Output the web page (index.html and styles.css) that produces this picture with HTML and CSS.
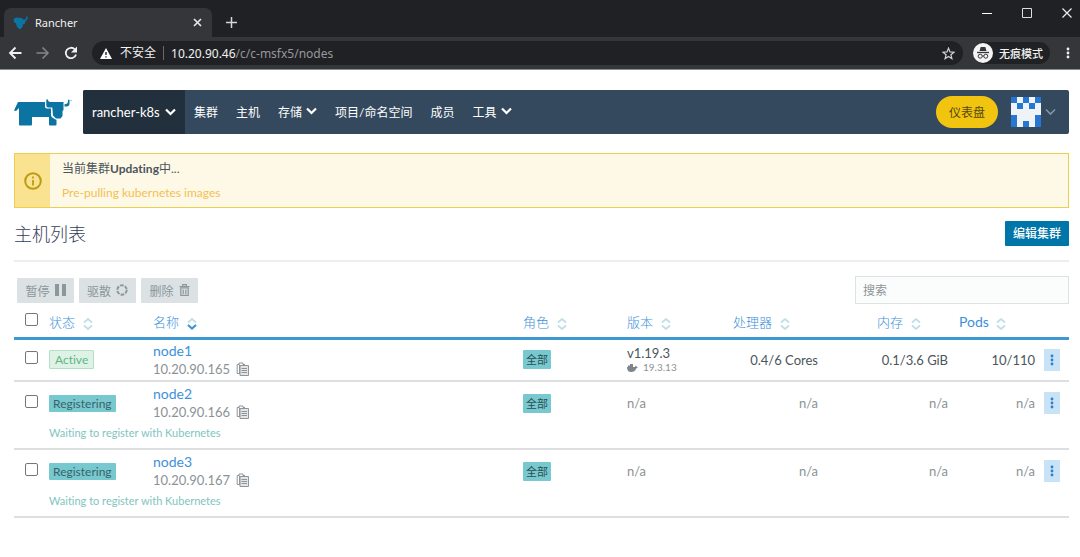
FILE: index.html
```html
<!DOCTYPE html>
<html lang="zh-CN">
<head>
<meta charset="utf-8">
<title>Rancher</title>
<link rel="stylesheet" href="styles.css">
</head>
<body>
<svg class="defs" aria-hidden="true">
  <symbol id="sort" viewBox="0 0 10 12"><path d="M1 4.500 5 1l4 3.500M1 7.500 5 11l4-3.500" fill="none" stroke="#bfdeeb" stroke-width="1.700"/></symbol>
  <symbol id="chev" viewBox="0 0 11 8"><path d="M1 1.500 5.500 6 10 1.500" fill="none" stroke="currentColor" stroke-width="2.200"/></symbol>
  <symbol id="copy" viewBox="0 0 13 14"><path d="M4 11.500H1.200v-9H3V1h4v1.500h2M3.500 2.500v9" fill="none" stroke="#8f9599"/><path d="M4 3.500h8.500v10H4z" fill="#e3e5e6" stroke="#8f9599"/><path d="M5.500 6.500h5.500M5.500 8.500h5.500M5.500 10.500h5.500" stroke="#8f9599"/></symbol>
  <symbol id="dots" viewBox="0 0 4 12"><circle cx="2" cy="2" r="1.400"/><circle cx="2" cy="6" r="1.400"/><circle cx="2" cy="10" r="1.400"/></symbol>
</svg>

<div class="browser">
  <div class="tabstrip">
    <div class="tab">
      <svg class="favicon" width="15" height="14" viewBox="0 0 15 14"><path d="M.5 3 3 1.500 9 2l1 1.500h2l1-1V.500h1.500v3L12.500 5 12 7.500l-2 1-.5 2.500L7 13.500 4 11 3 7.500 1 6z" fill="#0b74a3"/></svg>
      <span class="tab-title">Rancher</span>
      <button class="bare" aria-label="关闭标签页"><svg width="9" height="9" viewBox="0 0 9 9"><path d="M1 1l7 7M8 1 1 8" stroke="#e6e6e8" stroke-width="1.700"/></svg></button>
    </div>
    <button class="bare newtab" aria-label="新标签页"><svg width="11" height="11" viewBox="0 0 11 11"><path d="M5.500 0v11M0 5.500h11" stroke="#d5d6d8" stroke-width="1.500"/></svg></button>
    <div class="window-controls">
      <button class="bare" aria-label="最小化"><svg width="10" height="10" viewBox="0 0 10 10"><path d="M0 5.500h10" stroke="#fff"/></svg></button>
      <button class="bare" aria-label="最大化"><svg width="10" height="10" viewBox="0 0 10 10"><path d="M.5.500h9v9h-9z" fill="none" stroke="#ddd"/></svg></button>
      <button class="bare" aria-label="关闭"><svg width="10" height="10" viewBox="0 0 10 10"><path d="M.5.500l9 9M9.500.500l-9 9" stroke="#eee" stroke-width="1.200"/></svg></button>
    </div>
  </div>
  <div class="toolbar">
    <button class="bare" aria-label="后退"><svg width="14" height="14" viewBox="0 0 14 14"><path d="M13.500 7H2M7.500 1.500 2 7l5.500 5.500" fill="none" stroke="#f1f1f1" stroke-width="1.800"/></svg></button>
    <button class="bare" aria-label="前进"><svg width="14" height="14" viewBox="0 0 14 14"><path d="M.5 7H12M6.500 1.500 12 7l-5.500 5.500" fill="none" stroke="#85868a" stroke-width="1.500"/></svg></button>
    <button class="bare" aria-label="刷新"><svg width="14" height="14" viewBox="0 0 14 14"><path d="M12 8.500A5.200 5.200 0 1 1 10.900 3.500" fill="none" stroke="#f1f1f1" stroke-width="1.800"/><path d="M13 .5v6H7z" fill="#f1f1f1"/></svg></button>
    <div class="address">
      <svg width="12" height="11" viewBox="0 0 12 11"><path d="M6 0l6 11H0z" fill="#fff"/><path d="M6 4v3M6 8.200v1.400" stroke="#202124" stroke-width="1.400"/></svg>
      <span class="insecure">不安全</span>
      <span class="url"><b>10.20.90.46</b>/c/c-msfx5/nodes</span>
      <button class="bare star" aria-label="收藏"><svg width="13" height="13" viewBox="0 0 13 13"><path d="M6.500 1.200 8 4.900l4 .3-3.100 2.500 1 3.900-3.400-2.100-3.400 2.100 1-3.900L1 5.200l4-.3z" fill="none" stroke="#d0d1d3" stroke-width="1.200"/></svg></button>
    </div>
    <div class="incognito">
      <svg width="20" height="20" viewBox="0 0 20 20"><circle cx="10" cy="10" r="10" fill="#f4f4f4"/><path d="M6.500 8 7.700 4h4.600l1.200 4z" fill="#35363a"/><path d="M4 9.500h12" stroke="#35363a" stroke-width="1.300"/><circle cx="7.200" cy="13.200" r="2" fill="none" stroke="#35363a"/><circle cx="12.800" cy="13.200" r="2" fill="none" stroke="#35363a"/><path d="M9.200 13h1.600" stroke="#35363a"/></svg>
      <span>无痕模式</span>
    </div>
    <button class="bare menu" aria-label="菜单"><svg width="4" height="12" viewBox="0 0 4 12" fill="#f1f1f1"><use href="#dots"/></svg></button>
  </div>
</div>

<div class="page">
  <header class="header">
    <a class="logo" href="#" aria-label="Rancher"><svg width="58" height="27" viewBox="0 0 58 27" fill="#0b74a3"><path d="M4 3h27v4.500q0 2 2 2h4v6.500q0 2 2 3l3.500 2v4.500q0 1-1 1h-5.500q-1 0-1-1V18H18v7.500q0 1-1 1H6q-1 0-1-1V9L2 12 0 11.500z"/><path d="M32.300.5h1.700q0 2.500 2.500 2.500h13v8l-1 1v5l-2 2.500h-4.500l-3-3-.7-8H34q-1.700 0-1.700-2z"/><path d="M50.500 7.500V5.300q3.500 0 3.500-3V.800h1.500v3.700q0 3-3 3z"/><circle cx="57" cy="1.500" r=".7" fill="#6fa9c7"/></svg></a>
    <nav class="nav">
      <button class="cluster">rancher-k8s <svg width="11" height="8"><use href="#chev"/></svg></button>
      <a href="#">集群</a>
      <a href="#">主机</a>
      <a href="#">存储 <svg width="11" height="8"><use href="#chev"/></svg></a>
      <a href="#">项目/命名空间</a>
      <a href="#">成员</a>
      <a href="#">工具 <svg width="11" height="8"><use href="#chev"/></svg></a>
      <button class="dashboard">仪表盘</button>
      <button class="bare user" aria-label="用户菜单">
        <svg width="30" height="30" viewBox="0 0 5 5" shape-rendering="crispEdges"><path d="M0 0h5v5H0z" fill="#f0f3f6"/><path d="M0 0h1v1H0zM2 0h1v1H2zM4 0h1v1H4zM1 1h1v1H1zM3 1h1v1H3zM0 3h1v2H0zM4 3h1v2H4zM2 4h1v1H2z" fill="#2676d3"/></svg>
        <svg class="user-chev" width="11" height="8" viewBox="0 0 11 8"><path d="M1 1.500 5.500 6 10 1.500" fill="none" stroke="currentColor" stroke-width="1.600"/></svg>
      </button>
    </nav>
  </header>

  <section class="banner">
    <div class="banner-icon"><svg width="18" height="18" viewBox="0 0 18 18"><circle cx="9" cy="9" r="7.800" fill="none" stroke="#bd9b15" stroke-width="2"/><path d="M9 8v5.500M9 4.500v2" stroke="#bd9b15" stroke-width="1.800"/></svg></div>
    <div class="banner-text">
      <p>当前集群<b>Updating</b>中...</p>
      <p class="detail">Pre-pulling kubernetes images</p>
    </div>
  </section>

  <div class="title-row">
    <h1>主机列表</h1>
    <button class="edit">编辑集群</button>
  </div>

  <div class="actions">
    <button disabled>暂停 <svg width="11" height="12" viewBox="0 0 11 12"><path d="M0 0h4v12H0zM7 0h4v12H7z" fill="#8b979b"/></svg></button>
    <button disabled>驱散 <svg width="12" height="12" viewBox="0 0 12 12"><circle cx="6" cy="6" r="4.700" fill="none" stroke="#8b979b" stroke-width="2" stroke-dasharray="3.700 1.200"/></svg></button>
    <button disabled>删除 <svg width="11" height="12" viewBox="0 0 11 12"><path d="M1.800 4h7.400v7.300H1.800zM.5 2.700h10M3.700 2.500V.700h3.600v1.800M4.200 5.500v4.500M6.800 5.500v4.500" fill="none" stroke="#8b979b" stroke-width="1.200"/></svg></button>
    <input class="search" type="text" placeholder="搜索" aria-label="搜索">
  </div>

  <table class="nodes">
    <colgroup><col class="c-check"><col class="c-state"><col><col class="c-role"><col class="c-version"><col class="c-cpu"><col class="c-memory"><col class="c-pods"><col class="c-menu"></colgroup>
    <thead>
      <tr>
        <th><input type="checkbox" aria-label="全选"></th>
        <th>状态 <svg width="10" height="12"><use href="#sort"/></svg></th>
        <th>名称 <svg width="10" height="12" viewBox="0 0 10 12"><path d="M1 4.500 5 1l4 3.500" fill="none" stroke="#bfdeeb" stroke-width="1.700"/><path d="M1 7 5 10.500 9 7" fill="none" stroke="#3d94d6" stroke-width="2.200"/></svg></th>
        <th>角色 <svg width="10" height="12"><use href="#sort"/></svg></th>
        <th>版本 <svg width="10" height="12"><use href="#sort"/></svg></th>
        <th>处理器 <svg width="10" height="12"><use href="#sort"/></svg></th>
        <th>内存 <svg width="10" height="12"><use href="#sort"/></svg></th>
        <th class="latin">Pods <svg width="10" height="12"><use href="#sort"/></svg></th>
        <th></th>
      </tr>
    </thead>
    <tbody>
      <tr class="main">
        <td><input type="checkbox" aria-label="选择 node1"></td>
        <td><span class="badge active">Active</span></td>
        <td><a href="#">node1</a><div class="ip">10.20.90.165 <svg width="13" height="14"><use href="#copy"/></svg></div></td>
        <td><span class="badge role">全部</span></td>
        <td><div class="version">v1.19.3</div><div class="docker"><svg width="11" height="9" viewBox="0 0 11 9"><path d="M0 4h1V2.500h2V1h3v3h2l.7-1.500L10 4l1 .3-2 1.500Q8 9 4 9 0 9 0 4z" fill="#7d858a"/></svg> 19.3.13</div></td>
        <td class="num cpu">0.4/6 Cores</td>
        <td class="num memory">0.1/3.6 GiB</td>
        <td class="num pods">10/110</td>
        <td><button class="row-menu" aria-label="node1 操作"><svg width="4" height="12"><use href="#dots"/></svg></button></td>
      </tr>
    </tbody>
    <tbody>
      <tr class="main">
        <td><input type="checkbox" aria-label="选择 node2"></td>
        <td><span class="badge registering">Registering</span></td>
        <td><a href="#">node2</a><div class="ip">10.20.90.166 <svg width="13" height="14"><use href="#copy"/></svg></div></td>
        <td><span class="badge role">全部</span></td>
        <td class="na">n/a</td>
        <td class="num cpu na">n/a</td>
        <td class="num memory na">n/a</td>
        <td class="num pods na">n/a</td>
        <td><button class="row-menu" aria-label="node2 操作"><svg width="4" height="12"><use href="#dots"/></svg></button></td>
      </tr>
      <tr class="message"><td></td><td colspan="8">Waiting to register with Kubernetes</td></tr>
    </tbody>
    <tbody>
      <tr class="main">
        <td><input type="checkbox" aria-label="选择 node3"></td>
        <td><span class="badge registering">Registering</span></td>
        <td><a href="#">node3</a><div class="ip">10.20.90.167 <svg width="13" height="14"><use href="#copy"/></svg></div></td>
        <td><span class="badge role">全部</span></td>
        <td class="na">n/a</td>
        <td class="num cpu na">n/a</td>
        <td class="num memory na">n/a</td>
        <td class="num pods na">n/a</td>
        <td><button class="row-menu" aria-label="node3 操作"><svg width="4" height="12"><use href="#dots"/></svg></button></td>
      </tr>
      <tr class="message"><td></td><td colspan="8">Waiting to register with Kubernetes</td></tr>
    </tbody>
  </table>
</div>
</body>
</html>
```
FILE: styles.css
```css
* { box-sizing: border-box; }
body { margin: 0; background: #fff; color: #4b555c; font-family: Lato, "Noto Sans CJK SC", sans-serif; font-size: 13px; font-weight: 400; font-variant-ligatures: none; }
button, input { font: inherit; margin: 0; }
button { border: 0; cursor: pointer; }
a { color: #3d91db; text-decoration: none; }
svg { flex: none; }
.defs { position: absolute; width: 0; height: 0; }
.bare { display: flex; align-items: center; padding: 0; background: none; color: inherit; }

.browser { font-family: "Noto Sans", "Noto Sans CJK SC", sans-serif; color: #f1f1f1; }
.tabstrip { display: flex; align-items: flex-end; height: 37px; padding-left: 4px; background: #202124; }
.tab { display: flex; align-items: center; gap: 7px; width: 208px; height: 29px; padding: 0 10px 0 9px; border-radius: 7px 7px 0 0; background: #35363a; font-size: 11px; }
.tab-title { flex: 1; }
.newtab { height: 29px; margin-left: 14px; }
.window-controls { display: flex; align-self: flex-start; gap: 30px; margin-left: auto; padding: 8px 8px 0 0; }
.toolbar { display: flex; align-items: center; height: 33px; padding: 0 10px 0 8px; background: #35363a; border-bottom: 1px solid #8b8c8e; }
.toolbar > .bare { width: 28px; }
.toolbar > .menu { width: 4px; }
.address { display: flex; flex: 1; align-items: center; height: 24px; padding: 0 8px; margin-right: 10px; border-radius: 12px; background: #202124; font-size: 12px; }
.insecure { margin-left: 8px; padding-right: 7px; line-height: 14px; border-right: 1px solid #68696c; }
.url { margin-left: 7px; color: #96989b; }
.url b { font-weight: 400; color: #f1f1f1; }
.star { margin-left: auto; }
.incognito { display: flex; align-items: center; gap: 6px; height: 22px; padding-right: 7px; margin-right: 16px; border-radius: 11px; background: #202124; font-size: 11px; font-weight: 500; }

.page { padding: 20px 11px 0 14px; }
.header { display: flex; align-items: center; }
.logo { display: flex; width: 69px; }
.nav { display: flex; flex: 1; align-items: center; height: 44px; padding-right: 13px; border-radius: 2px; background: #34495e; color: #fff; font-size: 12px; }
.nav a { display: flex; align-items: center; gap: 4px; padding-bottom: 2px; margin-right: 18px; color: #fff; }
.cluster { display: flex; align-items: center; justify-content: space-between; width: 102px; height: 44px; padding: 0 9px 1px; margin-right: 9px; border-radius: 2px 0 0 2px; background: #22303d; color: #fff; font-size: 13px; }
.dashboard { height: 32px; padding: 0 13px 2px; margin-left: auto; border-radius: 16px; background: #f1c40f; color: #54480f; }
.user { gap: 4px; margin-left: 13px; }
.user-chev { color: #8496a7; }

.banner { display: flex; margin-top: 19px; border: 1px solid #edcf4f; background: #fef9e7; }
.banner-icon { display: flex; align-items: center; justify-content: center; width: 35px; background: #f9e391; }
.banner-text { padding: 4px 12px 3px; font-size: 12px; }
.banner p { margin: 0; line-height: 22px; }
.banner b { font-weight: 700; }
.banner .detail { padding-top: 2px; color: #f3bf52; }

.title-row { display: flex; align-items: center; justify-content: space-between; height: 54px; padding-bottom: 2px; border-bottom: 2px solid #eceef0; }
h1 { margin: 0; font-size: 18px; font-weight: 300; color: #34405a; }
.edit { height: 25px; padding: 0 8px 1px; border-radius: 1px; background: #0075a8; color: #fff; font-size: 12px; font-weight: 500; }

.actions { display: flex; align-items: center; gap: 5px; padding: 14px 0 4px 3px; }
.actions button { display: flex; align-items: center; justify-content: center; gap: 5px; width: 57px; height: 25px; padding: 0; border-radius: 1px; background: #dce2e3; color: #8b979b; font-size: 12px; cursor: default; }
.search { width: 214px; height: 28px; padding: 0 7px; margin-left: auto; border: 1px solid #dde3e5; background: #fbfcfc; font-size: 12px; }
.search::placeholder { color: #8f9496; }

.nodes { width: 100%; table-layout: fixed; border-collapse: collapse; }
.c-check { width: 35px; }
.c-state, .c-role { width: 104px; }
.c-version { width: 106px; }
.c-cpu { width: 144px; }
.c-memory { width: 82px; }
.c-pods { width: 85px; }
.c-menu { width: 25px; }
.nodes th { height: 30px; padding: 0 0 1px; color: #3d91db; font-size: 13px; font-weight: 300; text-align: left; white-space: nowrap; }
.nodes .latin { font-size: 14px; font-weight: 400; }
.nodes th svg { margin-left: 4px; vertical-align: -3px; }
.nodes thead { border-bottom: 3px solid #3d98d4; }
.nodes tbody { border-bottom: 2px solid #dddfe1; }
.nodes td { padding: 0; line-height: 18px; }
.nodes td a { font-size: 14px; }
.nodes .main { height: 43px; }
.nodes input { display: block; appearance: none; width: 13px; height: 13px; margin: 0 0 4px 11px; border: 1px solid #767676; border-radius: 2px; background: #fff; }
.nodes input:checked { background: #3d91db; }
.ip { display: flex; align-items: center; gap: 6px; color: #8b9296; }
.badge { display: inline-block; border-radius: 1px; font-size: 12px; line-height: 17px; }
.active { padding: 0 5px; border: 1px solid #b5dfc5; background: #def3e6; color: #5fb383; }
.registering { padding: 0 4px; background: #78c9cf; color: #38636a; }
.role { padding: 1px 3px; background: #78c9cf; color: #294f54; font-size: 11px; }
.version { line-height: 16px; }
.docker { display: flex; align-items: center; gap: 5px; color: #8b9296; font-size: 10px; line-height: 13px; }
.nodes .num { text-align: right; }
.nodes .cpu { padding-right: 59px; }
.nodes .memory { padding-right: 11px; }
.nodes .pods { padding-right: 9px; }
.nodes .na { color: #8b9296; }
.row-menu { display: flex; align-items: center; justify-content: center; width: 16px; height: 22px; padding: 0; background: #c9e3f6; fill: #2c7fcb; }
.nodes .message td { height: 25px; padding-bottom: 6px; color: #80c5c0; font-size: 11px; }
```
